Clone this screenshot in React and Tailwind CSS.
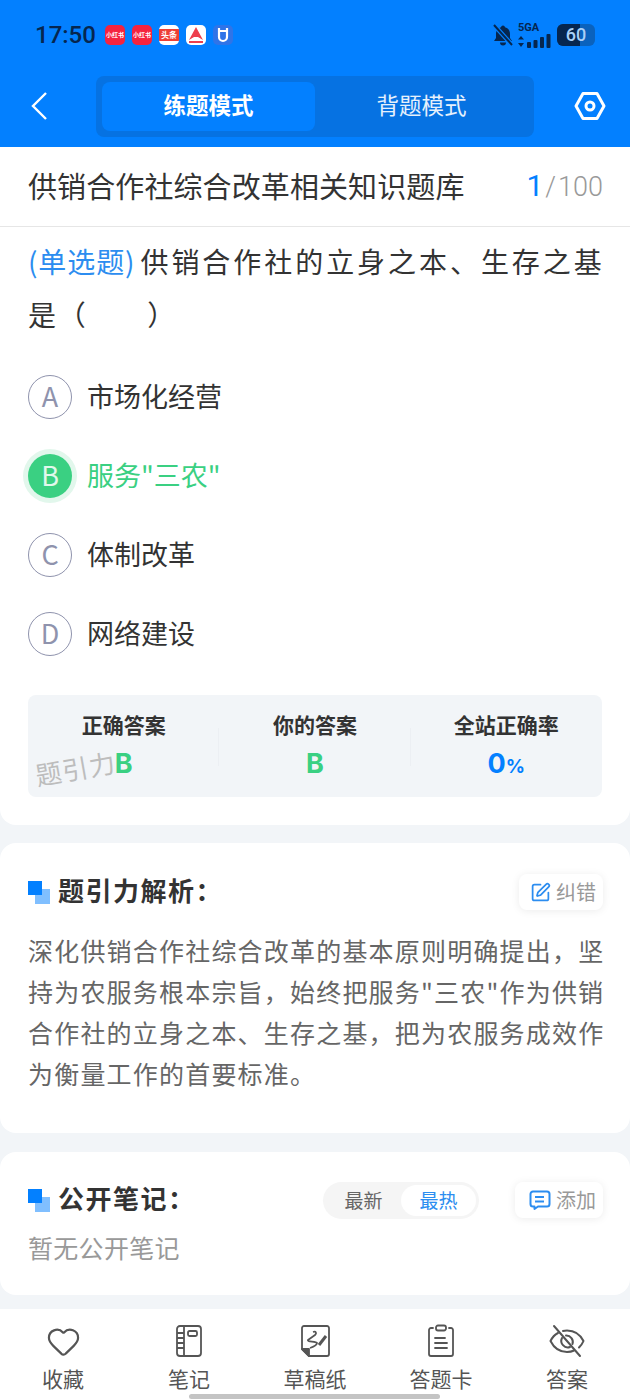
import React from 'react';
import { Heart, SquarePen } from 'lucide-react';

const FONT = { fontFamily: '"Noto Sans CJK SC", Roboto, sans-serif' };

const OPTIONS = [
    { key: 'A', text: '市场化经营' },
    { key: 'B', text: '服务"三农"', active: true },
    { key: 'C', text: '体制改革' },
    { key: 'D', text: '网络建设' },
];

// 状态栏小图标
function AppIcon({ bg, children }) {
    return (
        <div className={`w-5 h-5 rounded-[5px] flex items-center justify-center overflow-hidden text-[6px] font-bold leading-none ${bg}`}>
            {children}
        </div>
    );
}

function StatusBar() {
    return (
        <div className="h-[68px] pl-[35px] pr-[35px] pt-[2px] flex items-center justify-between">
            <div className="flex items-center">
                <span className="text-[24px] font-medium text-[#06264f] w-[70px]" style={{ fontFamily: 'Roboto, sans-serif' }}>17:50</span>
                <div className="flex items-center gap-[7px]">
                    <AppIcon bg="bg-[#f5233f] text-white">小红书</AppIcon>
                    <AppIcon bg="bg-[#f5233f] text-white">小红书</AppIcon>
                    <AppIcon bg="bg-white text-white">
                        <span className="bg-[#ee3f36] w-full h-3 flex items-center justify-center text-[8px]">头条</span>
                    </AppIcon>
                    <AppIcon bg="bg-white">
                        <svg viewBox="0 0 20 20" className="w-5 h-5">
                            <path d="M10 2 L17 15 L12 12 L8 12 L3 15 Z" fill="#ee3f4d" />
                            <rect x="3" y="16" width="14" height="2" fill="#ee3f4d" />
                        </svg>
                    </AppIcon>
                    <AppIcon bg="bg-[#2f74e8]">
                        <svg viewBox="0 0 20 20" className="w-5 h-5" fill="none" stroke="white" strokeWidth="2.2">
                            <path d="M6 3 V12 A4 4 0 0 0 14 12 V3 M6 6 H14" />
                        </svg>
                    </AppIcon>
                </div>
            </div>
            <div className="flex items-center">
                <svg viewBox="0 0 22 22" className="w-[22px] h-[22px] mr-[4px]">
                    <path d="M11 1.5 A2 2 0 0 1 13 3.2 C16.5 4 18 7 18 10 V14 L20 17 H2 L4 14 V10 C4 7 5.5 4 9 3.2 A2 2 0 0 1 11 1.5 Z M8 18.5 H14 A3 3 0 0 1 8 18.5 Z" fill="#06264f" />
                    <path d="M2 1 L20 21" stroke="#0380ff" strokeWidth="4.5" />
                    <path d="M2 1 L20 21" stroke="#06264f" strokeWidth="2" />
                </svg>
                <div className="w-[34px] mr-[5px] flex flex-col text-[#06264f]">
                    <span className="text-[11px] font-bold leading-[11px]" style={{ fontFamily: 'Roboto, sans-serif' }}>5GA</span>
                    <svg viewBox="0 0 34 16" className="w-[34px] h-4" fill="currentColor">
                        <path d="M3 3 L6 6.5 H0 Z M3 14 L0 10 H6 Z" />
                        <rect x="9" y="9" width="4" height="6" rx="1" />
                        <rect x="15.5" y="7" width="4" height="8" rx="1" />
                        <rect x="22" y="4" width="4" height="11" rx="1" />
                        <rect x="28.5" y="1" width="4" height="14" rx="1" />
                    </svg>
                </div>
                <div className="relative w-[38px] h-[22px] rounded-[6px] bg-[#0a62bd] overflow-hidden">
                    <div className="w-[23px] h-full bg-[#06264f]" />
                    <span className="absolute inset-0 text-center text-[18px] leading-[22px] font-medium text-[#a9d0f7]" style={{ fontFamily: 'Roboto, sans-serif' }}>60</span>
                </div>
            </div>
        </div>
    );
}

function Header() {
    return (
        <div className="bg-[#0380ff] h-[147px] shrink-0">
            <StatusBar />
            <div className="h-[79px] flex items-start pt-2 pl-[28px] pr-[24px]">
                <svg viewBox="0 0 20 30" className="w-5 h-[30px] mt-[15px] ml-[2px]" fill="none" stroke="white" strokeWidth="2.4">
                    <path d="M16 2 L3 15 L16 28" />
                </svg>
                <div className="ml-[46px] w-[438px] h-[61px] bg-[#0672e2] rounded-lg p-[6px] flex">
                    <div className="w-[213px] pb-[4px] bg-[#0380ff] rounded-lg flex items-center justify-center text-white text-[22.5px] font-bold">练题模式</div>
                    <div className="flex-1 pb-[4px] flex items-center justify-center text-white/90 text-[22.5px]">背题模式</div>
                </div>
                <svg viewBox="0 0 32 30" className="w-8 h-[30px] ml-[40px] mt-[15px]" fill="none" stroke="white" strokeWidth="3" strokeLinejoin="round">
                    <path d="M9 2.5 H23 L30 15 L23 27.5 H9 L2 15 Z" />
                    <circle cx="16" cy="15" r="4" />
                </svg>
            </div>
        </div>
    );
}

function Option({ item }) {
    return (
        <div className="h-[79px] flex items-center">
            {item.active ? (
                <div className="w-11 h-11 rounded-full bg-[#3ad082] ring-[5px] ring-[#e2f7ec] flex items-center justify-center text-white/85 text-[27px] font-normal">{item.key}</div>
            ) : (
                <div className="w-11 h-11 rounded-full border border-[#8f93ad] flex items-center justify-center text-[#8f93ad] text-[27px]">{item.key}</div>
            )}
            <span className={`ml-[15px] text-[27px] ${item.active ? 'text-[#3ad082]' : 'text-[#333]'}`}>{item.text}</span>
        </div>
    );
}

const STATS = [
    { label: '正确答案', value: 'B', color: 'text-[#3ad082]' },
    { label: '你的答案', value: 'B', color: 'text-[#3ad082]' },
    { label: '全站正确率', value: '0', unit: '%', color: 'text-[#0380ff]' },
];

function AnswerStats() {
    return (
        <div className="relative mx-[28px] mt-[22px] h-[102px] bg-[#f2f5f8] rounded-lg flex items-start pt-[14px]">
            {STATS.map((s, i) => (
                <div key={s.label} className="relative flex-1 flex flex-col items-center">
                    <span className="text-[21px] leading-[30px] font-bold text-[#333]">{s.label}</span>
                    <span className={`text-[27px] leading-[50px] font-bold ${s.color}`} style={{ fontFamily: 'Inter, sans-serif' }}>
                        {s.value}{s.unit && <span className="text-[19px]">{s.unit}</span>}
                    </span>
                    {i < 2 && <div className="absolute right-0 top-[19px] w-px h-[38px] bg-[#eceff3]" />}
                </div>
            ))}
            {/* 水印 */}
            <span className="absolute left-[7px] top-[56px] text-[26px] leading-[34px] text-[#bdbdbd] -rotate-[10deg] tracking-[1px]">题引力</span>
        </div>
    );
}

function SectionTitle({ children }) {
    return (
        <div className="flex items-center">
            <div className="relative w-[22px] h-[23px]">
                <div className="absolute right-0 bottom-0 w-[15px] h-[15px] bg-[#80bfff]" />
                <div className="absolute left-0 top-0 w-[14px] h-[14px] bg-[#0380ff]" />
            </div>
            <span className="ml-[8px] pb-[5px] text-[26px] font-bold text-[#333] tracking-[1.5px]">{children}</span>
        </div>
    );
}

function SmallAction({ icon, label, width }) {
    return (
        <div className={`h-9 rounded-lg bg-white shadow-[0_1px_8px_rgba(0,0,0,0.08)] flex items-center justify-end pr-[7px] gap-[5px] ${width}`}>
            {icon}
            <span className="text-[20px] text-[#999]">{label}</span>
        </div>
    );
}

const TABS = ['收藏', '笔记', '草稿纸', '答题卡', '答案'];

function TabIcon({ index }) {
    if (index === 0) return <Heart size={35} strokeWidth={1.5} className="text-[#555]" />;
    if (index === 4) {
        return (
            <svg viewBox="0 0 36 34" className="w-9 h-[34px]" fill="none" stroke="#555" strokeWidth="2" strokeLinecap="round" strokeLinejoin="round">
                <path d="M9 9 C5 11 3 14 1.5 17 C5 24 11 28 18 28 C21 28 23 27.5 25 26.5" />
                <path d="M14 7 C15.5 6.5 17 6.4 18 6.4 C25 6.4 31 10 34.5 17 C33.5 19.5 32 21.5 30 23.5" />
                <path d="M13 14 A6.5 6.5 0 0 0 21 23 M23.5 20 A6.5 6.5 0 0 0 17 11.5" />
                <path d="M5 2 L31 32" />
            </svg>
        );
    }
    if (index === 1) {
        return (
            <svg viewBox="0 0 32 34" className="w-8 h-[34px]" fill="none" stroke="#555" strokeWidth="1.8">
                <rect x="4" y="2" width="24" height="30" rx="3" />
                <path d="M11 2 V32 M4 9 H11 M4 14 H11 M4 19 H11 M4 24 H11" />
                <rect x="15" y="7" width="9" height="5" rx="1.5" />
            </svg>
        );
    }
    if (index === 2) {
        return (
            <svg viewBox="0 0 32 34" className="w-8 h-[34px]" fill="none" stroke="#555" strokeWidth="1.8" strokeLinejoin="round">
                <path d="M10 32 H28 A2 2 0 0 0 30 30 V4 A2 2 0 0 0 28 2 H5 A2 2 0 0 0 3 4 V25 Z" />
                <path d="M3 25 H10 V32 Z" fill="#555" />
                <path d="M14 8 C17 7 18 9 16 11 L9 16 C8 18 17 17 18 19 C18 21 14 23 11 24" />
                <path d="M20 21 L27 12" strokeWidth="3" />
            </svg>
        );
    }
    return (
        <svg viewBox="0 0 32 34" className="w-8 h-[34px]" fill="none" stroke="#555" strokeWidth="1.8" strokeLinecap="round">
            <path d="M8 4 H6 A2 2 0 0 0 4 6 V30 A2 2 0 0 0 6 32 H26 A2 2 0 0 0 28 30 V6 A2 2 0 0 0 26 4 H24" />
            <rect x="11" y="1.5" width="10" height="5" rx="2" />
            <path d="M10 14 H20 M10 19 H22 M10 24 H22" />
        </svg>
    );
}

export default function App() {
    return (
        <div className="relative w-[630px] h-[1400px] bg-[#f2f5f8] overflow-hidden flex flex-col" style={FONT}>
            <Header />

            {/* 题目卡片 */}
            <div className="bg-white rounded-b-2xl h-[678px] shrink-0">
                <div className="h-[80px] pb-[2px] flex items-center justify-between pl-[28px] pr-[27px] border-b border-[#e6e6e6]">
                    <span className="text-[29px] text-[#333] tracking-[0.1px]">供销合作社综合改革相关知识题库</span>
                    <span className="text-[27px] font-light text-[#999]" style={{ fontFamily: 'Roboto, sans-serif' }}>
                        <span className="text-[#0380ff] text-[30px] font-normal">1</span>
                        <span className="mx-[2px]">/</span>100
                    </span>
                </div>
                <div className="pl-[28px] pr-[22px] pt-[8px] text-[28px] leading-[53px] text-[#333]">
                    <span className="text-[#2c8df0] tracking-[0.9px]">(单选题)</span>
                    <span className="ml-[5px] tracking-[2.95px]">供销合作社的立身之本、生存之基</span>
                    <span className="tracking-[1.8px]">是（　　）</span>
                </div>
                <div className="px-[28px] mt-[16px]">
                    {OPTIONS.map((item) => (
                        <Option key={item.key} item={item} />
                    ))}
                </div>
                <AnswerStats />
            </div>

            {/* 解析 */}
            <div className="mt-[18px] bg-white rounded-2xl h-[290px] shrink-0 pl-[28px] pr-[27px]">
                <div className="pt-[27px] flex items-center justify-between">
                    <SectionTitle>题引力解析：</SectionTitle>
                    <SmallAction width="w-[84px]" icon={<SquarePen size={21} className="text-[#2c8df0]" />} label="纠错" />
                </div>
                <p className="mt-[16px] -mr-[4px] text-[25px] leading-[41px] text-[#666] tracking-[1.2px]">
                    深化供销合作社综合改革的基本原则明确提出，坚持为农服务根本宗旨，始终把服务"三农"作为供销合作社的立身之本、生存之基，把为农服务成效作为衡量工作的首要标准。
                </p>
            </div>

            {/* 公开笔记 */}
            <div className="mt-[19px] bg-white rounded-2xl h-[143px] shrink-0 pl-[28px] pr-[27px]">
                <div className="pt-[26px] flex items-center">
                    <SectionTitle>公开笔记：</SectionTitle>
                    <div className="ml-auto w-[156px] h-[37px] rounded-full bg-[#f5f5f5] flex items-center p-[3px] text-[19px]">
                        <span className="flex-1 text-center text-[#666]">最新</span>
                        <span className="w-[75px] h-[31px] rounded-full bg-white text-[#2c8df0] flex items-center justify-center">最热</span>
                    </div>
                    <div className="ml-[36px]">
                        <SmallAction
                            width="w-[88px]"
                            label="添加"
                            icon={
                                <svg viewBox="0 0 22 22" className="w-[22px] h-[22px]" fill="none" stroke="#2c8df0" strokeWidth="2" strokeLinejoin="round">
                                    <path d="M4 2.5 H18 A2.5 2.5 0 0 1 20.5 5 V15 A2.5 2.5 0 0 1 18 17.5 H9 L5.5 20 V17.5 H4 A2.5 2.5 0 0 1 1.5 15 V5 A2.5 2.5 0 0 1 4 2.5 Z" />
                                    <path d="M6 8 H15 M6 12.5 H15" />
                                </svg>
                            }
                        />
                    </div>
                </div>
                <div className="mt-[7px] text-[25px] leading-[36px] text-[#999] tracking-[0.3px]">暂无公开笔记</div>
            </div>

            {/* 底部导航 */}
            <div className="mt-[14px] flex-1 bg-white flex pt-[13px]">
                {TABS.map((label, i) => (
                    <div key={label} className="w-[126px] flex flex-col items-center">
                        <div className="h-[38px] flex items-center justify-center"><TabIcon index={i} /></div>
                        <span className="mt-[3px] text-[21px] leading-[30px] text-[#555]">{label}</span>
                    </div>
                ))}
            </div>

            {/* home indicator */}
            <div className="absolute left-[189px] bottom-[1px] w-[251px] h-[5px] rounded-full bg-[#c4c4c4]" />
        </div>
    );
}
